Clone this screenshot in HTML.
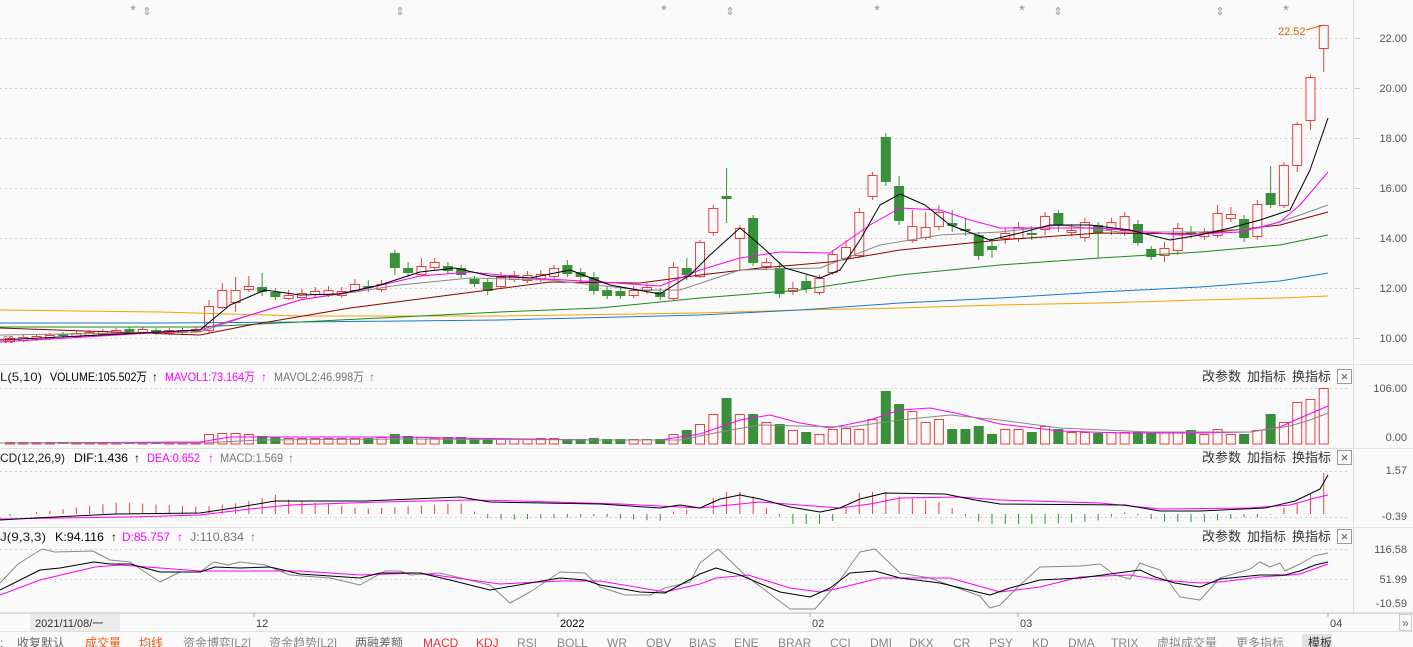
<!DOCTYPE html>
<html><head><meta charset="utf-8"><style>
html,body{margin:0;padding:0;background:#fafafa;width:1413px;height:647px;overflow:hidden}
svg{display:block}
text{font-family:"Liberation Sans","Noto Sans CJK SC",sans-serif}
</style></head><body>
<svg id="s" width="1413" height="647" xmlns="http://www.w3.org/2000/svg"></svg>
<script>
var S=document.getElementById('s'),h='';
function R(x,y,w,hh,f,st){h+='<rect x="'+x+'" y="'+y+'" width="'+w+'" height="'+hh+'" fill="'+(f||'none')+'"'+(st?' stroke="'+st+'" stroke-width="1"':'')+'/>';}
function L(x1,y1,x2,y2,c,d){h+='<line x1="'+x1+'" y1="'+y1+'" x2="'+x2+'" y2="'+y2+'" stroke="'+c+'" stroke-width="1"'+(d?' stroke-dasharray="'+d+'"':'')+'/>';}
function P(pts,c,w){h+='<polyline fill="none" stroke="'+c+'" stroke-width="'+(w||1)+'" stroke-linejoin="round" points="'+pts.map(function(p){return p.join(',')}).join(' ')+'"/>';}
function T(x,y,s,c,fs,anchor,tl){h+='<text x="'+x+'" y="'+y+'" fill="'+c+'" font-size="'+(fs||12)+'"'+(anchor?' text-anchor="'+anchor+'"':'')+(tl?' textLength="'+tl+'" lengthAdjust="spacingAndGlyphs"':'')+'>'+s+'</text>';}
function I(pts,x){for(var i=0;i<pts.length-1;i++){if(x>=pts[i][0]&&x<=pts[i+1][0]){var t=(x-pts[i][0])/((pts[i+1][0]-pts[i][0])||1);return pts[i][1]+t*(pts[i+1][1]-pts[i][1]);}}return x<pts[0][0]?pts[0][1]:pts[pts.length-1][1];}
R(0,0,1413,647,'#fafafa');
L(1353.5,0,1353.5,612,'#dcdcdc');
[38,88,138,188,238,288,338].forEach(function(y,i){L(0,y+.5,1350,y+.5,'#d0d0d0','2,3');T(1407,y+4,(22-2*i).toFixed(2),'#555',11,'end');L(1354,y+.5,1360,y+.5,'#ccc');});
[364,448,527,612].forEach(function(y){L(0,y+.5,1413,y+.5,'#e0e0e0');});
[[133,'*'],[147,'⇕'],[400,'⇕'],[664,'*'],[730,'⇕'],[877,'*'],[1022,'*'],[1058,'⇕'],[1220,'⇕'],[1286,'*']].forEach(function(m){T(m[0],15,m[1],'#999',m[1]=='*'?15:11,'middle');});
var C=[[338,341,1],[337,340,1],[336,339,1],[335,338,1],[334,336,0],[333,336,1],[332,335,1],[331,334,1],[330,333,1],[329,332,0],[329,332,1],[330,333,0],[330,333,1],[330,332,1],[329,331,1],
[306,330,1,300,333],[290,307,1,283,309],[290,302,1,277,312],[286,289,1,276,292],[287,292,0,273,296],[292,297,0,288,300],[295,298,1,290,300],[293,297,1,289,300],[291,294,1,287,297],[290,294,1,286,297],[291,295,1,287,298],[284,290,1,279,293],[286,288,0,280,292],[284,289,1,280,292],[253,268,0,250,275],[268,273,0,262,277],[266,274,1,258,277],[262,267,1,258,270],[266,271,0,262,274],[268,275,0,265,278],[279,284,0,276,287],[282,291,0,278,295],[277,286,1,272,289],[275,279,1,271,282],[275,280,1,271,283],[274,279,1,270,282],[268,276,1,265,279],[265,274,0,260,277],[272,277,0,268,282],[277,291,0,272,295],[290,296,0,286,299],[291,296,0,287,299],[290,295,1,286,298],[287,290,1,283,294],[292,297,0,288,300],
[267,298,1,262,300],[268,275,0,258,280],[242,276,1,240,278],[208,232,1,205,236],[196,199,0,168,223],[228,238,1,225,270],[218,263,0,215,266],[262,266,1,258,270],[268,294,0,262,298],[288,291,1,282,295],[281,289,0,275,293],[278,292,1,275,295],[254,272,1,250,275],[247,258,1,240,262],[212,255,1,208,258],[175,196,1,172,200],[137,182,0,133,186],[186,221,0,176,225],[226,240,1,210,243],[227,237,1,212,240],[212,226,1,205,230],[223,226,0,210,232],[229,231,0,218,236],[235,256,0,232,260],[246,250,0,240,258],[233,238,1,228,244],[227,238,1,222,242],[233,235,0,226,240],[216,229,1,212,235],[213,226,0,210,232],[230,232,1,224,236],[222,237,1,218,242],[225,233,0,222,258],[222,229,1,218,235],[216,230,1,212,236],[224,243,0,220,246],[249,257,0,246,260],[248,255,1,242,262],[228,250,1,223,255],[232,234,0,226,238],[232,236,1,228,240],[213,235,1,205,238],[214,218,1,207,222],[219,238,0,215,242],[204,236,1,200,240],[193,205,0,166,208],[165,205,1,162,208],[124,165,1,122,172],[77,120,1,75,130],[25,48,1,25,72]];
var X=function(i){return 10+i*13.27;};
C.forEach(function(c,i){var x=X(i),col=c[2]?'#e84040':'#3a8f3a',t=Math.min(c[0],c[1]),b=Math.max(c[0],c[1]);var hi=c[3]||t-2,lo=c[4]||b+2;
L(x,hi,x,t,col);L(x,b,x,lo,col);if(c[2])R(x-4.5,t+.5,9,Math.max(b-t,1),'#fafafa',col);else R(x-5,t,10,Math.max(b-t,1.5),col);});
P([[0,310],[160,312],[300,316],[500,316],[700,313],[800,310],[900,308],[1000,305],[1100,303],[1200,300],[1280,298],[1328,296]],'#f5a000');
P([[0,323],[160,323],[300,322],[500,320],[700,315],[800,310],[900,303],[1000,298],[1100,292],[1200,287],[1280,281],[1328,273]],'#1878d0');
P([[0,327],[200,327],[300,322],[400,317],[500,312],[600,308],[700,298],[800,290],[900,275],[1000,265],[1100,258],[1200,252],[1280,245],[1328,235]],'#1a8a1a');
P([[0,328],[200,335],[250,325],[350,308],[450,295],[550,282],[640,283],[700,275],[760,268],[830,262],[900,250],[1000,240],[1100,233],[1200,234],[1280,225],[1328,212]],'#8b0000');
P([[0,335],[200,332],[250,315],[300,300],[400,285],[470,278],[550,280],[640,290],[680,290],[740,270],[820,268],[880,245],[940,235],[1000,232],[1060,225],[1120,232],[1200,232],[1260,228],[1300,215],[1328,205]],'#888');
P([[0,342],[200,330],[240,318],[300,300],[360,290],[420,276],[470,272],[530,278],[600,282],[660,286],[700,270],[740,258],[780,252],[830,253],[870,225],[900,208],[940,210],[970,220],[1000,228],[1060,228],[1100,228],[1180,235],[1240,232],[1280,222],[1300,205],[1328,172]],'#ff00ff');
P([[0,340],[200,330],[230,305],[265,290],[300,295],[340,294],[380,285],[420,272],[455,268],[490,276],[530,278],[570,270],[610,285],[660,294],[690,275],[710,255],[740,228],[760,245],[785,268],[820,278],[840,270],[860,240],[880,205],[900,194],[925,205],[950,225],[990,240],[1020,233],[1050,225],[1090,225],[1130,230],[1170,240],[1200,235],[1230,228],[1260,220],[1290,210],[1310,170],[1328,118]],'#000');
T(1278,35,'22.52','#e05a00',11);L(1306,30,1324,25,'#e05a00');
T(0,343,'.60','#e84040',10);
function hdr(y){T(1202,y,'改参数','#333',13);T(1247,y,'加指标','#333',13);T(1292,y,'换指标','#333',13);R(1337.5,y-11.5,14,14,'#fafafa','#999');T(1344.5,y,'×','#555',13,'middle');}
var hf=12;
T(0,381,'L(5,10)','#222',hf,null,42);T(50,381,'VOLUME:105.502万','#000',hf,null,97);T(152,381,'↑','#000',hf);T(165,381,'MAVOL1:73.164万','#ff00ff',hf,null,90);T(261,381,'↑','#ff00ff',hf);T(274,381,'MAVOL2:46.998万','#777',hf,null,90);T(369,381,'↑','#777',hf);hdr(381);
T(0,462,'CD(12,26,9)','#222',hf,null,65);T(74,462,'DIF:1.436','#000',hf,null,54);T(134,462,'↑','#000',hf);T(147,462,'DEA:0.652','#ff00ff',hf,null,53);T(208,462,'↑','#ff00ff',hf);T(220,462,'MACD:1.569','#777',hf,null,63);T(288,462,'↑','#777',hf);hdr(462);
T(0,541,'J(9,3,3)','#222',hf,null,46);T(55,541,'K:94.116','#000',hf,null,49);T(111,541,'↑','#000',hf);T(122,541,'D:85.757','#ff00ff',hf,null,48);T(177,541,'↑','#ff00ff',hf);T(190,541,'J:110.834','#777',hf,null,54);T(250,541,'↑','#777',hf);hdr(541);
L(0,388.5,1350,388.5,'#d0d0d0','2,3');T(1407,392,'106.00','#555',11,'end');T(1407,441,'0.00','#555',11,'end');
var V=[2,2,2,2,2,2,2,2,2,2,2,2,2,2,2,10,11,11,10,8,7,6,6,6,6,6,6,6,7,10,8,7,6,7,7,6,5,5,5,5,6,6,5,5,6,5,5,5,5,5,10,14,20,30,46,30,30,22,20,14,12,10,15,16,15,25,53,40,33,22,25,15,15,18,10,15,15,12,18,15,12,12,11,12,12,12,11,12,12,14,10,15,10,10,14,30,22,42,45,56];
V.forEach(function(v,i){var x=X(i),c=C[i],col=c[2]?'#e84040':'#3a8f3a';if(c[2])R(x-4.5,444.5-v,9,v-.5,'#fafafa',col);else R(x-5,444-v,10,v,col);});
P([[0,443],[200,442],[230,437],[300,437],[400,437],[450,438],[600,440],[660,440],[700,434],[740,420],[770,415],[800,423],[830,428],[870,420],[900,410],[930,408],[960,414],[1000,424],[1060,431],[1120,433],[1200,433],[1250,432],[1280,427],[1300,418],[1328,406]],'#ff00ff');
P([[0,443],[200,443],[260,440],[400,439],[600,440],[680,440],[720,432],[760,425],[800,426],[850,427],[900,420],[950,415],[1000,420],[1060,428],[1150,432],[1250,432],[1290,426],[1310,420],[1328,413]],'#888');
L(0,471.5,1350,471.5,'#d0d0d0','2,3');L(0,517.5,1350,517.5,'#d0d0d0','2,3');T(1407,474,'1.57','#555',11,'end');T(1407,520,'-0.39','#555',11,'end');
var DIF=[[0,520],[35,518],[75,516],[115,514],[200,513],[240,507],[275,501],[365,501],[460,497],[490,502],[600,504],[660,508],[680,505],[700,508],[720,499],[740,495],[760,499],[790,507],[820,512],[840,508],[860,499],[885,493],[945,494],[975,500],[1000,504],[1125,505],[1160,511],[1200,511],[1265,508],[1295,501],[1320,489],[1328,475]];
var DEA=[[0,519],[60,518],[130,517],[200,515],[250,509],[290,505],[380,502],[470,500],[520,501],[620,504],[700,508],[730,505],[760,502],[800,505],[840,508],[870,504],[900,498],[960,497],[1000,500],[1100,503],[1160,509],[1250,508],[1290,505],[1315,498],[1328,495]];
for(var i=0;i<100;i++){var x=X(i),d=(I(DEA,x)-I(DIF,x))*3.5;if(Math.abs(d)<0.8)continue;d=Math.max(Math.min(d,22),-10);var col=d>0?'#e84040':'#3a8f3a';if(i==99)d=41;L(x,514,x,514-d,col);}
P(DEA,'#ff00ff');P(DIF,'#000');
L(0,549.5,1350,549.5,'#d0d0d0','2,3');L(0,579.5,1350,579.5,'#d0d0d0','2,3');
P([[0,583],[18,564],[42,549],[55,552],[93,551],[110,560],[130,562],[160,582],[180,572],[200,572],[214,562],[228,565],[240,562],[265,565],[290,575],[330,578],[360,585],[385,571],[400,571],[410,575],[440,573],[490,585],[510,603],[530,592],[560,572],[585,573],[600,587],[625,595],[650,595],[665,588],[690,582],[700,563],[718,549],[745,575],[790,609],[815,609],[840,580],[860,552],[875,549],[900,573],[930,578],[980,596],[990,608],[1000,605],[1020,585],[1040,567],[1080,566],[1100,564],[1115,575],[1130,579],[1140,563],[1145,565],[1160,570],[1180,597],[1200,600],[1220,578],[1250,569],[1260,562],[1270,567],[1280,563],[1285,571],[1300,564],[1314,556],[1328,553]],'#888');
P([[0,595],[40,580],[95,567],[120,565],[200,571],[300,571],[360,575],[420,573],[500,584],[560,581],[600,581],[665,592],[700,584],[716,578],[748,575],[790,588],[820,592],[840,588],[880,578],[950,578],[1000,592],[1040,587],[1080,577],[1130,575],[1160,580],[1200,583],[1220,582],[1260,577],[1290,575],[1300,574],[1328,564]],'#ff00ff');
P([[0,590],[40,570],[60,568],[94,562],[110,564],[130,564],[160,572],[200,572],[215,567],[240,568],[270,567],[300,574],[360,578],[380,573],[420,573],[450,580],[490,590],[530,583],[560,578],[585,580],[600,585],[640,592],[665,593],[680,585],[700,574],[716,568],[740,575],[780,592],[810,597],[830,588],[850,573],[875,571],[900,578],[940,583],[990,595],[1010,588],[1040,580],[1080,578],[1110,574],[1140,570],[1155,577],[1175,583],[1200,587],[1220,579],[1260,575],[1285,575],[1300,571],[1315,565],[1328,562]],'#000');
R(1355,530,58,82,'#fafafa');T(1407,553,'116.58','#555',11,'end');T(1407,583,'51.99','#555',11,'end');T(1407,607,'-10.59','#555',11,'end');
L(0,613.5,1413,613.5,'#d8d8d8');
R(30,614,90,17,'#ebebeb');T(35,627,'2021/11/08/一','#333',11);
[[256,'12'],[560,'2022'],[812,'02'],[1020,'03'],[1330,'04']].forEach(function(a){L(a[0]-2,613,a[0]-2,617,'#aaa');T(a[0],627,a[1],a[1]=='2022'?'#000':'#444',11);});
R(1399.5,614.5,12,16,'#fafafa','#ccc');T(1405.5,627,'»','#666',12,'middle');
L(0,631.5,1413,631.5,'#e0e0e0');
var tabs=[[0,':','#666'],[17,'收复默认','#666'],[85,'成交量','#e85a10'],[139,'均线','#e85a10'],[183,'资金博弈[L2]','#888'],[269,'资金趋势[L2]','#888'],[355,'两融差额','#666'],[423,'MACD','#ee3030'],[476,'KDJ','#ee3030'],[517,'RSI','#888'],[557,'BOLL','#888'],[607,'WR','#888'],[646,'OBV','#888'],[689,'BIAS','#888'],[734,'ENE','#888'],[778,'BRAR','#888'],[830,'CCI','#888'],[870,'DMI','#888'],[909,'DKX','#888'],[953,'CR','#888'],[989,'PSY','#888'],[1032,'KD','#888'],[1068,'DMA','#888'],[1111,'TRIX','#888'],[1157,'虚拟成交量','#888'],[1236,'更多指标','#888']];
R(1302,634,30,13,'#e2e2e2');
tabs.forEach(function(t){T(t[0],647,t[1],t[2],12);});
T(1308,647,'模板','#333',12);
S.innerHTML=h;
</script>
</body></html>
